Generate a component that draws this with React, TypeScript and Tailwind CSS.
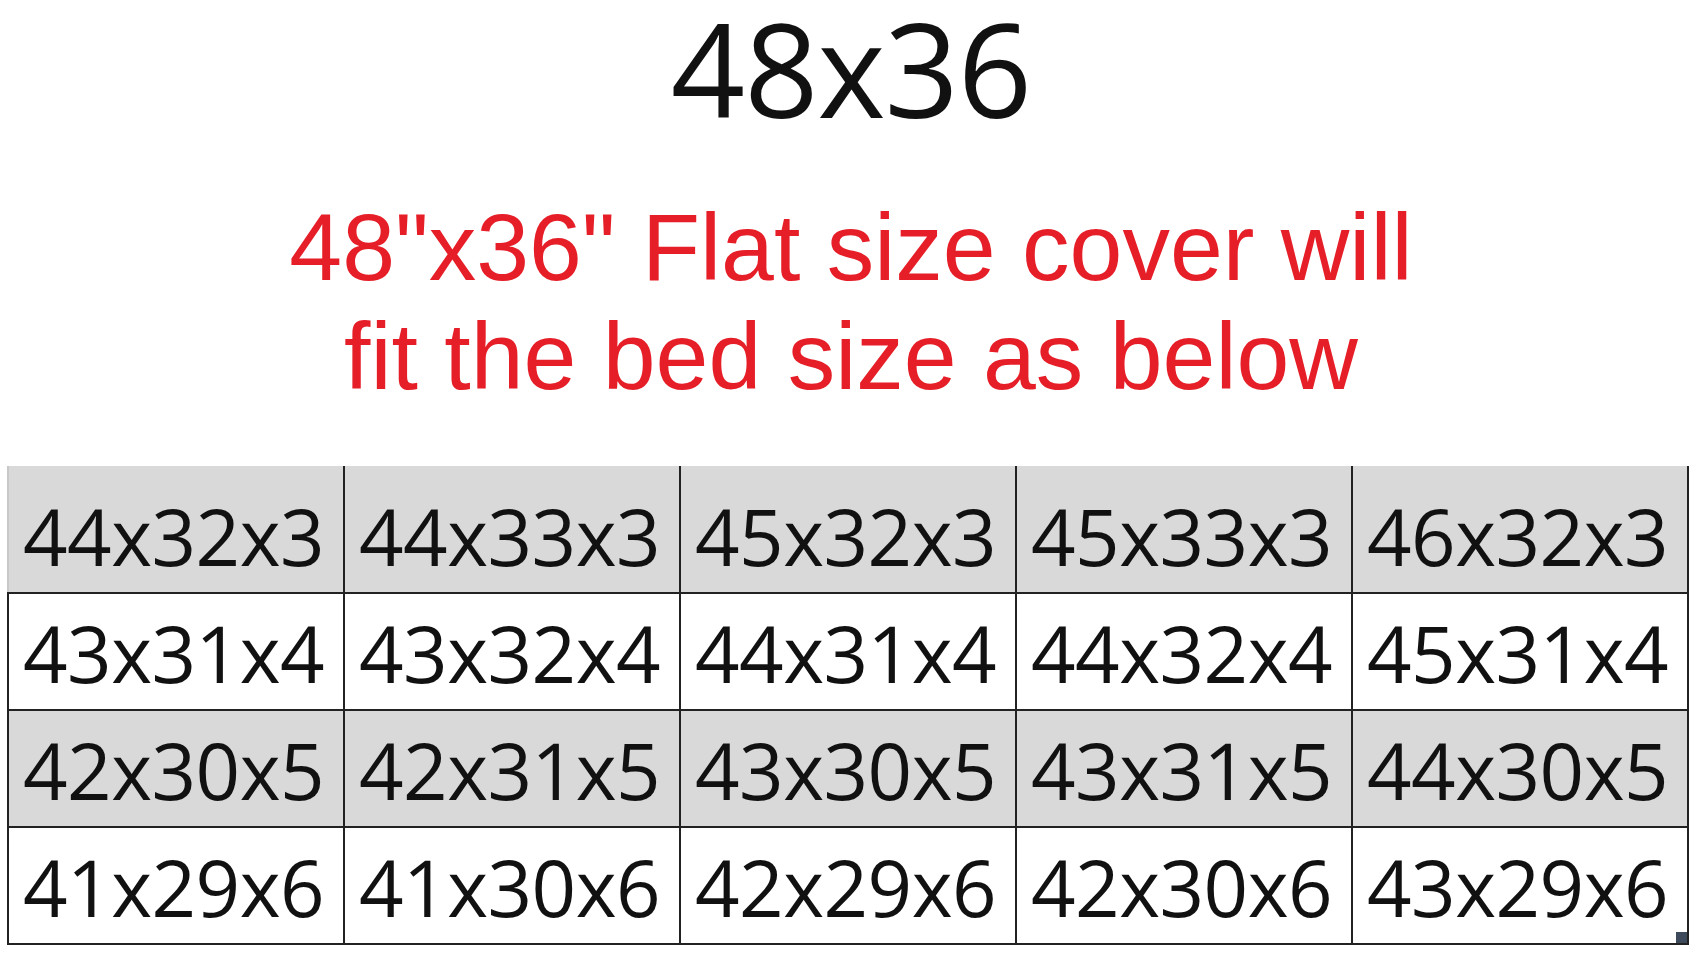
const rows: string[][] = [
  ["44x32x3", "44x33x3", "45x32x3", "45x33x3", "46x32x3"],
  ["43x31x4", "43x32x4", "44x31x4", "44x32x4", "45x31x4"],
  ["42x30x5", "42x31x5", "43x30x5", "43x31x5", "44x30x5"],
  ["41x29x6", "41x30x6", "42x29x6", "42x30x6", "43x29x6"],
];

const rowHeights = ["h-[128px]", "h-[117px]", "h-[117px]", "h-[117px]"];

export default function App() {
  return (
    <div className="h-[961px] w-[1702px] overflow-hidden bg-white">
      <h1 className="text-center font-['Open_Sans',sans-serif] text-[130px] leading-[136px] font-normal tracking-[-1px] text-[#111]">
        48x36
      </h1>

      <p className="mt-[57px] text-center font-['Liberation_Sans',Arial,sans-serif] text-[95px] leading-[109px] text-[#e61e28]">
        48&quot;x36&quot; Flat size cover will
        <br />
        fit the bed size as below
      </p>

      <div className="mt-[55px] ml-[7px] w-[1682px] border-r-2 border-[#222]">
        {rows.map((row, ri) => (
          <div
            key={ri}
            className={`grid grid-cols-5 border-b-2 border-[#222] ${rowHeights[ri]} ${
              ri % 2 === 0 ? "bg-[#d9d9d9]" : "bg-white"
            }`}
          >
            {row.map((cell, ci) => (
              <div
                key={ci}
                className={`relative flex items-end pb-[17px] pl-[14px] font-['Open_Sans',sans-serif] text-[78px] leading-[78px] tracking-[-0.5px] text-[#111] ${
                  ci === 0 && ri === 0
                    ? "border-l-2 border-[#c8c8c8]"
                    : "border-l-2 border-[#222]"
                }`}
              >
                {cell}
                {ri === 3 && ci === 4 && (
                  <span className="absolute right-0 bottom-0 h-[11px] w-[11px] bg-[#3c4a5c]" />
                )}
              </div>
            ))}
          </div>
        ))}
      </div>
    </div>
  );
}
